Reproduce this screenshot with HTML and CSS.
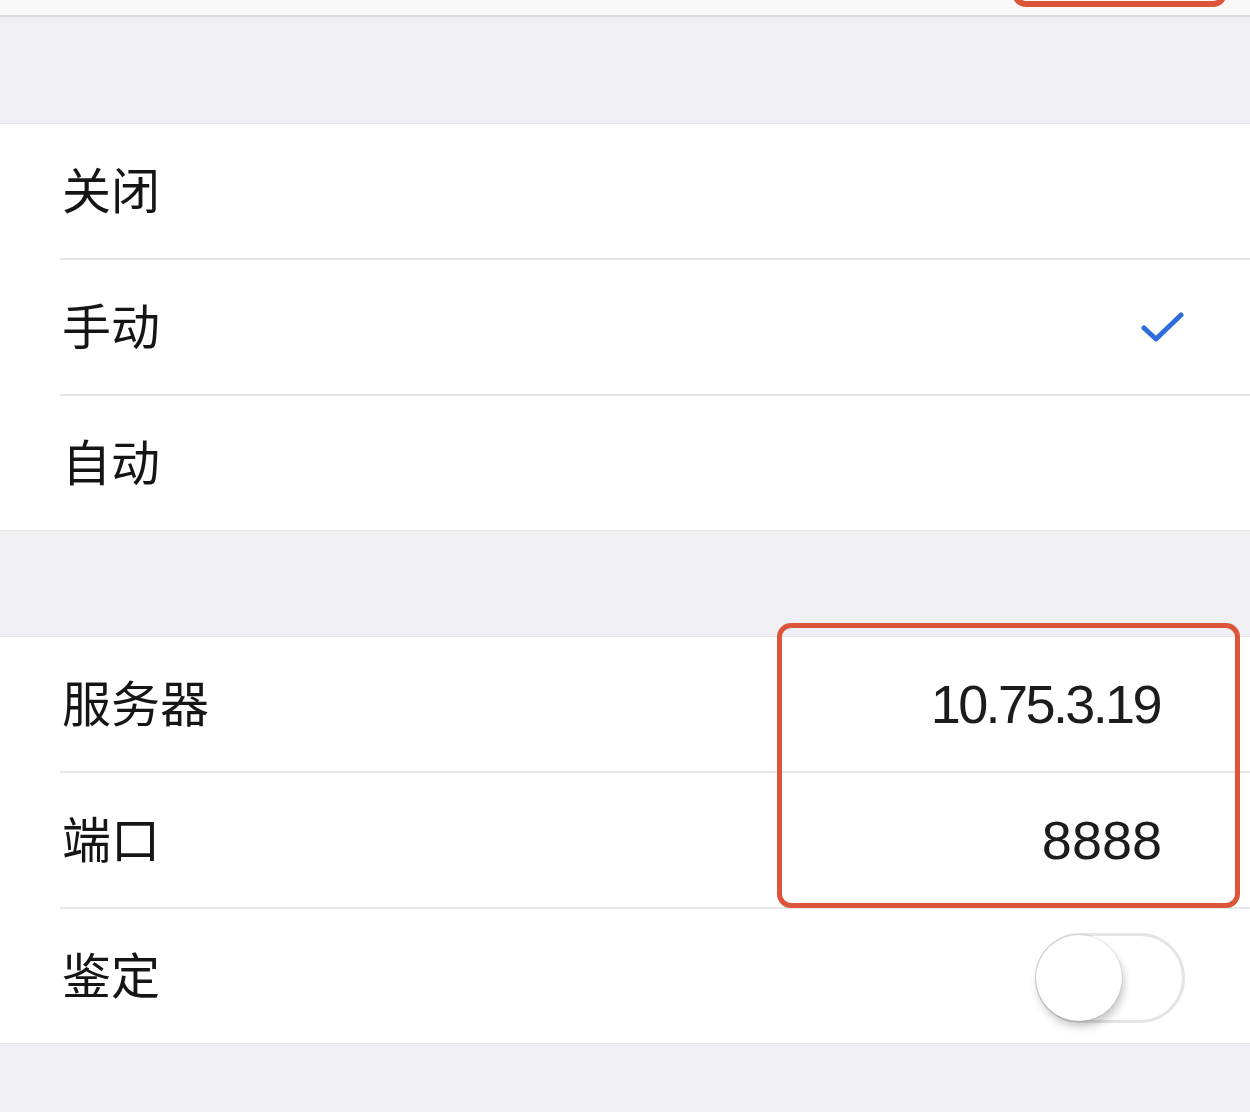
FILE: index.html
```html
<!DOCTYPE html>
<html lang="zh-CN">
<head>
<meta charset="utf-8">
<link rel="stylesheet" href="styles.css">
</head>
<body>
<div class="screen">
  <div class="topbar">
    <div class="mark mark-top"></div>
  </div>
  <div class="gap gap-1"></div>
  <div class="group">
    <div class="row"><span class="label">关闭</span></div>
    <div class="row sep"><span class="label">手动</span>
      <svg class="check" viewBox="0 0 44 36" width="44" height="36"><path d="M3 19 L15 30 L40 6" fill="none" stroke="#2f6ddc" stroke-width="5" stroke-linecap="round" stroke-linejoin="round"/></svg>
    </div>
    <div class="row sep"><span class="label">自动</span></div>
  </div>
  <div class="gap gap-2"></div>
  <div class="group group-proxy">
    <div class="mark mark-values"></div>
    <div class="row"><span class="label">服务器</span><span class="value value-ip">10.75.3.19</span></div>
    <div class="row sep"><span class="label">端口</span><span class="value">8888</span></div>
    <div class="row sep"><span class="label">鉴定</span>
      <div class="switch"><div class="knob"></div></div>
    </div>
  </div>
</div>
</body>
</html>
```

FILE: styles.css
```css
html, body {
  margin: 0;
  padding: 0;
}
body {
  background: #efeff4;
  font-family: "Noto Sans CJK SC", "Noto Sans", sans-serif;
  color: #161616;
}
.screen {
  width: 1250px;
  height: 1112px;
  overflow: hidden;
  background: #efeff4;
}
.topbar {
  position: relative;
  height: 15px;
  background: #f8f8f9;
  border-bottom: 2px solid #dadadd;
}
.gap-1 { height: 106px; }
.gap-2 { height: 105px; }
.group {
  position: relative;
  background: #ffffff;
  border-top: 1px solid #e6e6ea;
  border-bottom: 1px solid #e6e6ea;
}
.row {
  position: relative;
  height: 134px;
  display: flex;
  align-items: center;
  padding-left: 62px;
}
.row.sep {
  border-top: 2px solid transparent;
}
.row.sep::before {
  content: "";
  position: absolute;
  left: 60px;
  right: 0;
  top: -2px;
  height: 2px;
  background: #e7e7ea;
}
.label {
  font-size: 49px;
  line-height: 1;
  font-weight: 400;
  color: #151515;
  margin-bottom: 8px;
}
.value {
  margin-left: auto;
  margin-right: 88px;
  font-family: "Liberation Sans", Arial, sans-serif;
  font-size: 54px;
  line-height: 1;
  color: #1c1c1c;
}
.value-ip {
  letter-spacing: -2.6px;
  margin-right: 90px;
}
.check {
  margin-left: auto;
  margin-right: 65px;
  margin-top: 0;
  display: block;
}
.switch {
  margin-left: auto;
  margin-right: 65px;
  width: 150px;
  height: 90px;
  box-sizing: border-box;
  border: 3px solid #e4e4e6;
  border-radius: 45px;
  background: #ffffff;
  display: flex;
  align-items: center;
  margin-top: 4px;
}
.knob {
  width: 86px;
  height: 86px;
  border-radius: 50%;
  background: #ffffff;
  margin-left: -2px;
  box-shadow: 2px 6px 8px rgba(0, 0, 0, 0.22), 0 0 0 1px rgba(0, 0, 0, 0.07);
}
.mark {
  position: absolute;
  box-sizing: border-box;
  border: 5px solid #dc5538;
  border-radius: 14px;
  pointer-events: none;
  z-index: 2;
}
.mark-top {
  left: 1012px;
  width: 215px;
  top: -60px;
  height: 67px;
  border-width: 6px;
}
.mark-values {
  left: 777px;
  width: 463px;
  top: -14px;
  height: 285px;
}
```
